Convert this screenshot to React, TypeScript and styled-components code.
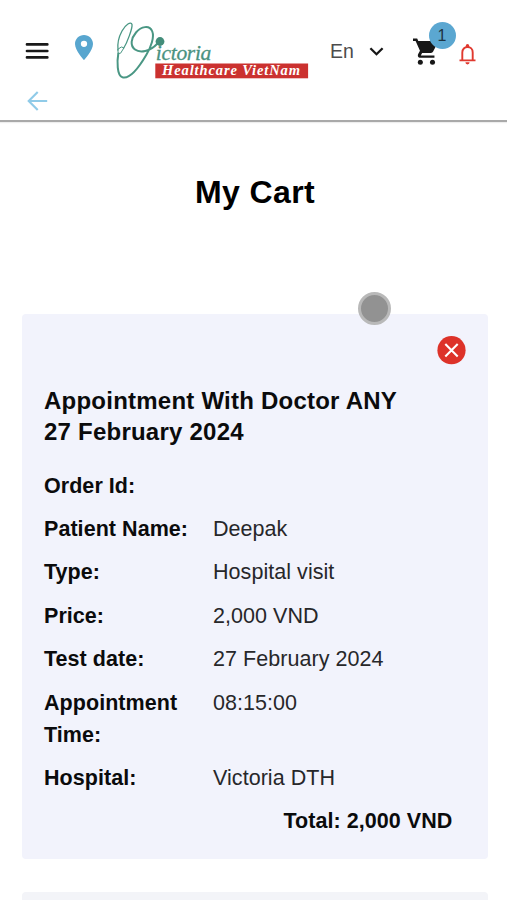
import React from "react";
import styled, { createGlobalStyle } from "styled-components";

const GlobalStyle = createGlobalStyle`
  * { box-sizing: border-box; }
  html, body { margin: 0; background: #fff; }
  body {
    height: 900px;
    overflow: hidden;
    font-family: "Liberation Sans", Arial, sans-serif;
    color: #0b0b0c;
  }
`;

const Page = styled.div`
  position: relative;
  height: 900px;
  overflow: hidden;
`;

const Header = styled.header`
  height: 122px;
  padding-top: 16px;
  border-bottom: 2px solid #a9a9a9;
  box-shadow: 0 1px 1px #eeeeee;
`;

const Toolbar = styled.div`
  display: flex;
  align-items: flex-start;
  height: 70px;
  padding-left: 25px;
`;

const IconButton = styled.button<{ $width: number; $top?: number; $gap?: number }>`
  flex: none;
  width: ${(p) => p.$width}px;
  margin: ${(p) => p.$top ?? 0}px 0 0 ${(p) => p.$gap ?? 0}px;
  padding: 0;
  border: 0;
  background: none;
  svg { display: block; }
`;

const Logo = styled.a`
  flex: none;
  width: 200px;
  margin-left: 16px;
  svg { display: block; }
`;

const Language = styled.button`
  display: flex;
  align-items: center;
  justify-content: space-between;
  width: 54px;
  height: 24px;
  margin: 23px 0 0 21px;
  padding: 0;
  border: 0;
  background: none;
  color: #4c4c4c;
  font: 19.5px/24px "Liberation Sans", Arial, sans-serif;
  svg { flex: none; }
`;

const CartButton = styled.button`
  position: relative;
  flex: none;
  width: 28px;
  height: 32px;
  margin: 19px 0 0 29px;
  padding: 0;
  border: 0;
  background: none;
  svg { display: block; }
`;

const Badge = styled.span`
  position: absolute;
  top: -13px;
  left: 15.5px;
  width: 27px;
  height: 27px;
  border-radius: 50%;
  background: #5ba7d1;
  color: #1d3442;
  font: 16px/27px "Liberation Sans", Arial, sans-serif;
  text-align: center;
`;

const BackButton = styled.button`
  display: block;
  margin: 5px 0 0 27px;
  padding: 0;
  border: 0;
  background: none;
  svg { display: block; }
`;

const Title = styled.h1`
  margin: 51px 0 0 3px;
  font-size: 32px;
  line-height: 38px;
  letter-spacing: 0.4px;
  text-align: center;
  color: #000;
`;

const CardList = styled.main`
  display: flex;
  flex-direction: column;
  gap: 33px;
  padding: 103px 19px 0 22px;
`;

const Card = styled.article<{ $tone?: string }>`
  flex: none;
  height: 545px;
  padding: 21.5px 22px;
  border-radius: 4px;
  background: ${(p) => p.$tone ?? "#f2f3fc"};
`;

const CardActions = styled.div`
  display: flex;
  justify-content: flex-end;
`;

const CardTitle = styled.h2`
  margin: 20.5px 0 0;
  font-size: 24px;
  line-height: 31px;
  letter-spacing: 0.23px;
`;

const Details = styled.dl`
  display: grid;
  grid-template-columns: 169px 1fr;
  row-gap: 11.4px;
  margin: 22.6px 0 0;
  font-size: 21.5px;
  line-height: 32px;
  letter-spacing: 0.05px;
`;

const Label = styled.dt`
  font-weight: 700;
`;

const Value = styled.dd`
  margin: 0;
  color: #27272a;
`;

const Total = styled.p`
  margin: 11px 13.6px 0 0;
  font-size: 21.5px;
  font-weight: 700;
  line-height: 32px;
  letter-spacing: 0.05px;
  text-align: right;
`;

const TouchPointer = styled.div`
  position: absolute;
  top: 292px;
  left: 358px;
  width: 33px;
  height: 33px;
  border: 3px solid #b9b9b9;
  border-radius: 50%;
  background: #929292;
`;

const MenuIcon = () => (
  <svg width="24" height="18" viewBox="0 0 24 18">
    <path d="M2 2.4h20.3M2 9h20.3M2 15.4h20.3" stroke="#191919" strokeWidth="2.7" strokeLinecap="round" />
  </svg>
);

const PinIcon = () => (
  <svg width="18" height="25" viewBox="0 0 18 25">
    <path
      d="M9 0C4 0 0 4 0 8.9 0 15.4 9 25 9 25s9-9.6 9-16.1C18 4 14 0 9 0Zm0 12a3.15 3.15 0 1 1 0-6.3A3.15 3.15 0 0 1 9 12Z"
      fill="#58a6cf"
    />
  </svg>
);

const VictoriaLogo = () => (
  <svg width="200" height="66" viewBox="109 16 200 66">
    <g fill="none" stroke="#4a9784" strokeLinecap="round" strokeLinejoin="round">
      <path d="M118.3 53.5C117 61 116.8 75.5 122.5 77.3C131 79.5 141 64 146.5 54.5C151 47 154.5 37 152.3 31.5C149.5 24.5 141 26.5 136 32.5C131 38.5 129.8 45.5 135 49.5C140 53.2 150 51.5 157 44" strokeWidth="2" />
      <path d="M118 50C117.3 44 119 36.5 122 31C125.5 24.5 131 21 132 24.5C132.6 28 127.5 42 123.5 48.5" strokeWidth="1.3" />
      <path d="M121 47.2L117.8 49.3L118.2 53.5L120.6 53.2L123.7 48.2Z" strokeWidth="1" />
    </g>
    <circle cx="160" cy="41.5" r="4.4" fill="#438d7a" />
    <text x="155.8" y="60.4" textLength="55.5" lengthAdjust="spacing" fill="#4a9280" stroke="#4a9280" strokeWidth=".3" fontFamily="Liberation Serif, serif" fontStyle="italic" fontSize="21.5">
      ictoria
    </text>
    <rect x="155.3" y="63.5" width="152.8" height="14.8" fill="#cb312f" />
    <text x="162" y="75.3" textLength="138" lengthAdjust="spacing" fill="#fff" fontFamily="Liberation Serif, serif" fontStyle="italic" fontWeight="700" fontSize="14.5">
      Healthcare VietNam
    </text>
  </svg>
);

const ChevronIcon = () => (
  <svg width="15" height="9" viewBox="0 0 15 9">
    <path d="M1.4 1.2 7.5 7.2l6.1-6" fill="none" stroke="#171717" strokeWidth="2.3" />
  </svg>
);

const CartIcon = () => (
  <svg width="26" height="30" viewBox="0 0 28 30" preserveAspectRatio="none">
    <path
      d="M0 2.5V5h2.8l4.7 9.8-1.9 3.1c-1.1 2.1.4 3.9 2.2 3.9h15.3v-2.4H8.4l1.4-2.5h9.5c1.1 0 1.9-.5 2.4-1.4l4.6-8.3c.5-1-.1-2.1-1.3-2.1H5.7L4.5 2.5Z"
      fill="#171717"
    />
    <ellipse cx="7.9" cy="26.2" rx="2.7" ry="2.5" fill="#171717" />
    <ellipse cx="21" cy="26.2" rx="2.7" ry="2.5" fill="#171717" />
  </svg>
);

const BellIcon = () => (
  <svg width="17" height="21" viewBox="0 0 17 21">
    <path
      d="M3.3 16V8.4C3.3 5.2 5.6 3 8.5 3s5.2 2.2 5.2 5.4V16M.5 16.4h16"
      fill="none"
      stroke="#e0392f"
      strokeWidth="1.9"
    />
    <path d="M6.8 3V1.7a1.7 1.7 0 0 1 3.4 0V3ZM6.4 18.3h4.2a2.1 2.1 0 0 1-4.2 0Z" fill="#e0392f" />
  </svg>
);

const BackIcon = () => (
  <svg width="21" height="20" viewBox="0 0 21 20">
    <path d="M20.2 10H1.7M10.7 1 1.7 10l9 9" fill="none" stroke="#90cbe8" strokeWidth="2.1" />
  </svg>
);

const RemoveIcon = () => (
  <svg width="29" height="29" viewBox="0 0 29 29">
    <circle cx="14.5" cy="14.2" r="14.1" fill="#dd3229" />
    <path d="m8.3 8 12.4 12.4m0-12.4L8.3 20.4" stroke="#fff" strokeWidth="2.1" />
  </svg>
);

const details: [string, string][] = [
  ["Order Id:", ""],
  ["Patient Name:", "Deepak"],
  ["Type:", "Hospital visit"],
  ["Price:", "2,000 VND"],
  ["Test date:", "27 February 2024"],
  ["Appointment Time:", "08:15:00"],
  ["Hospital:", "Victoria DTH"],
];

export default function App() {
  return (
    <Page>
      <GlobalStyle />
      <Header>
        <Toolbar>
          <IconButton $width={24} $top={26} aria-label="Menu"><MenuIcon /></IconButton>
          <IconButton $width={18} $top={19} $gap={26} aria-label="Locations"><PinIcon /></IconButton>
          <Logo><VictoriaLogo /></Logo>
          <Language>En<ChevronIcon /></Language>
          <CartButton aria-label="Cart">
            <CartIcon />
            <Badge>1</Badge>
          </CartButton>
          <IconButton $width={17} $top={28} $gap={18} aria-label="Notifications"><BellIcon /></IconButton>
        </Toolbar>
        <BackButton aria-label="Back"><BackIcon /></BackButton>
      </Header>
      <Title>My Cart</Title>
      <CardList>
        <Card>
          <CardActions>
            <IconButton $width={29} aria-label="Remove"><RemoveIcon /></IconButton>
          </CardActions>
          <CardTitle>Appointment With Doctor ANY<br />27 February 2024</CardTitle>
          <Details>
            {details.map(([label, value]) => (
              <React.Fragment key={label}>
                <Label>{label}</Label>
                <Value>{value}</Value>
              </React.Fragment>
            ))}
          </Details>
          <Total>Total: 2,000 VND</Total>
        </Card>
        <Card $tone="#f3f4f8" />
      </CardList>
      <TouchPointer />
    </Page>
  );
}
